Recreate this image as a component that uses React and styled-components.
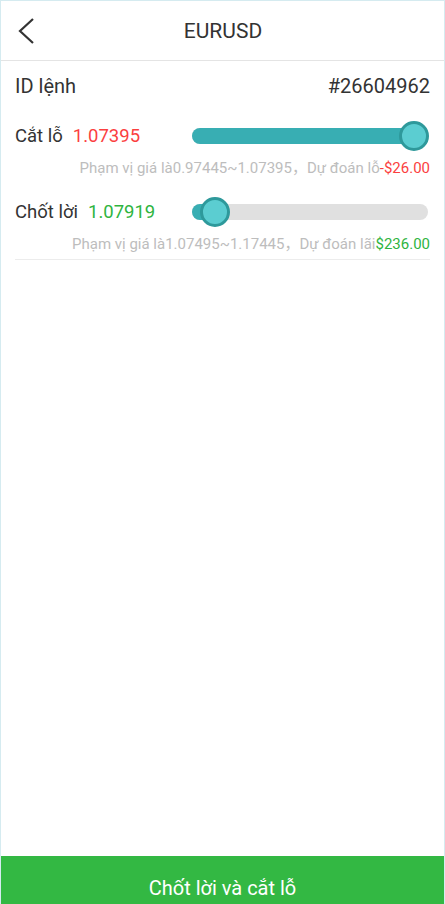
import React from 'react';
import styled, { createGlobalStyle } from 'styled-components';

const GlobalStyle = createGlobalStyle`
  html, body {
    margin: 0;
    padding: 0;
    background: #fff;
    overflow: hidden;
  }
  body {
    font-family: Roboto, "Noto Sans CJK SC", "Noto Sans", sans-serif;
  }
`;

const Page = styled.div`
  box-sizing: border-box;
  width: 445px;
  height: 920px;
  display: flex;
  flex-direction: column;
  border: 1px solid #d5ebf0;
  border-bottom: none;
  background: #fff;
`;

const Header = styled.header`
  height: 59px;
  display: flex;
  align-items: center;
  justify-content: center;
  position: relative;
  border-bottom: 1px solid #e4e4e4;
`;

const BackButton = styled.button`
  position: absolute;
  left: 12px;
  top: 12px;
  width: 28px;
  height: 36px;
  padding: 0;
  border: none;
  background: none;
  display: flex;
  align-items: center;
  justify-content: center;
`;

const Title = styled.h1`
  margin: 0 0 0 1px;
  font-size: 21px;
  font-weight: 400;
  color: #333;
`;

const Content = styled.main`
  flex: 1;
  padding: 0 14px;
`;

const InfoRow = styled.div`
  height: 50px;
  display: flex;
  align-items: center;
  justify-content: space-between;
  font-size: 20px;
  color: #333;
`;

const Section = styled.section`
  margin-top: ${p => p.$gap}px;
`;

const SliderRow = styled.div`
  height: 46px;
  display: flex;
  align-items: center;
`;

const Label = styled.div`
  flex: 1;
  font-size: 18.5px;
  color: #333;
`;

const Value = styled.span`
  margin-left: ${p => (p.$inline ? 0 : 10)}px;
  color: ${p => (p.$tone === 'loss' ? '#fb3f3f' : '#2fb43f')};
`;

const Slider = styled.div`
  position: relative;
  width: 236px;
  height: 16px;
  margin-right: 2px;
  border-radius: 8px;
  background: #e0e0e0;
`;

const Fill = styled.div`
  height: 100%;
  border-radius: 8px;
  background: #38aeb3;
`;

const Thumb = styled.div`
  position: absolute;
  top: 50%;
  box-sizing: border-box;
  width: 30px;
  height: 30px;
  margin: -15px 0 0 -15px;
  border-radius: 50%;
  border: 3px solid #2e999b;
  background: #5bcdd1;
`;

const Hint = styled.div`
  height: 18px;
  line-height: 18px;
  text-align: right;
  font-size: 15px;
  color: #bdbdbd;
  white-space: nowrap;
`;

const Divider = styled.hr`
  margin: 6px 0 0;
  border: none;
  border-top: 1px solid #ececec;
`;

const SubmitButton = styled.button`
  height: 64px;
  width: 100%;
  border: none;
  background: #33b843;
  color: #fff;
  font-family: inherit;
  font-size: 20px;
`;

const levels = [
  {
    label: 'Cắt lỗ',
    value: '1.07395',
    tone: 'loss',
    thumb: 94,
    fill: 100,
    range: '0.97445~1.07395',
    forecast: 'Dự đoán lỗ',
    amount: '-$26.00',
    gap: 2,
  },
  {
    label: 'Chốt lời',
    value: '1.07919',
    tone: 'profit',
    thumb: 9.8,
    fill: 9.8,
    range: '1.07495~1.17445',
    forecast: 'Dự đoán lãi',
    amount: '$236.00',
    gap: 12,
  },
];

export default function App() {
  return (
    <>
      <GlobalStyle />
      <Page>
        <Header>
          <BackButton aria-label="back">
            <svg width="20" height="28" viewBox="0 0 20 28">
              <polyline points="16,2 3,14 16,26" fill="none" stroke="#333" strokeWidth="2.2" />
            </svg>
          </BackButton>
          <Title>EURUSD</Title>
        </Header>
        <Content>
          <InfoRow>
            <span>ID lệnh</span>
            <span>#26604962</span>
          </InfoRow>
          {levels.map(l => (
            <Section key={l.label} $gap={l.gap}>
              <SliderRow>
                <Label>
                  {l.label}
                  <Value $tone={l.tone}>{l.value}</Value>
                </Label>
                <Slider>
                  <Fill style={{ width: `${l.fill}%` }} />
                  <Thumb style={{ left: `${l.thumb}%` }} />
                </Slider>
              </SliderRow>
              <Hint>
                Phạm vị giá là{l.range}，{l.forecast}
                <Value $inline $tone={l.tone}>{l.amount}</Value>
              </Hint>
            </Section>
          ))}
          <Divider />
        </Content>
        <SubmitButton>Chốt lời và cắt lỗ</SubmitButton>
      </Page>
    </>
  );
}
